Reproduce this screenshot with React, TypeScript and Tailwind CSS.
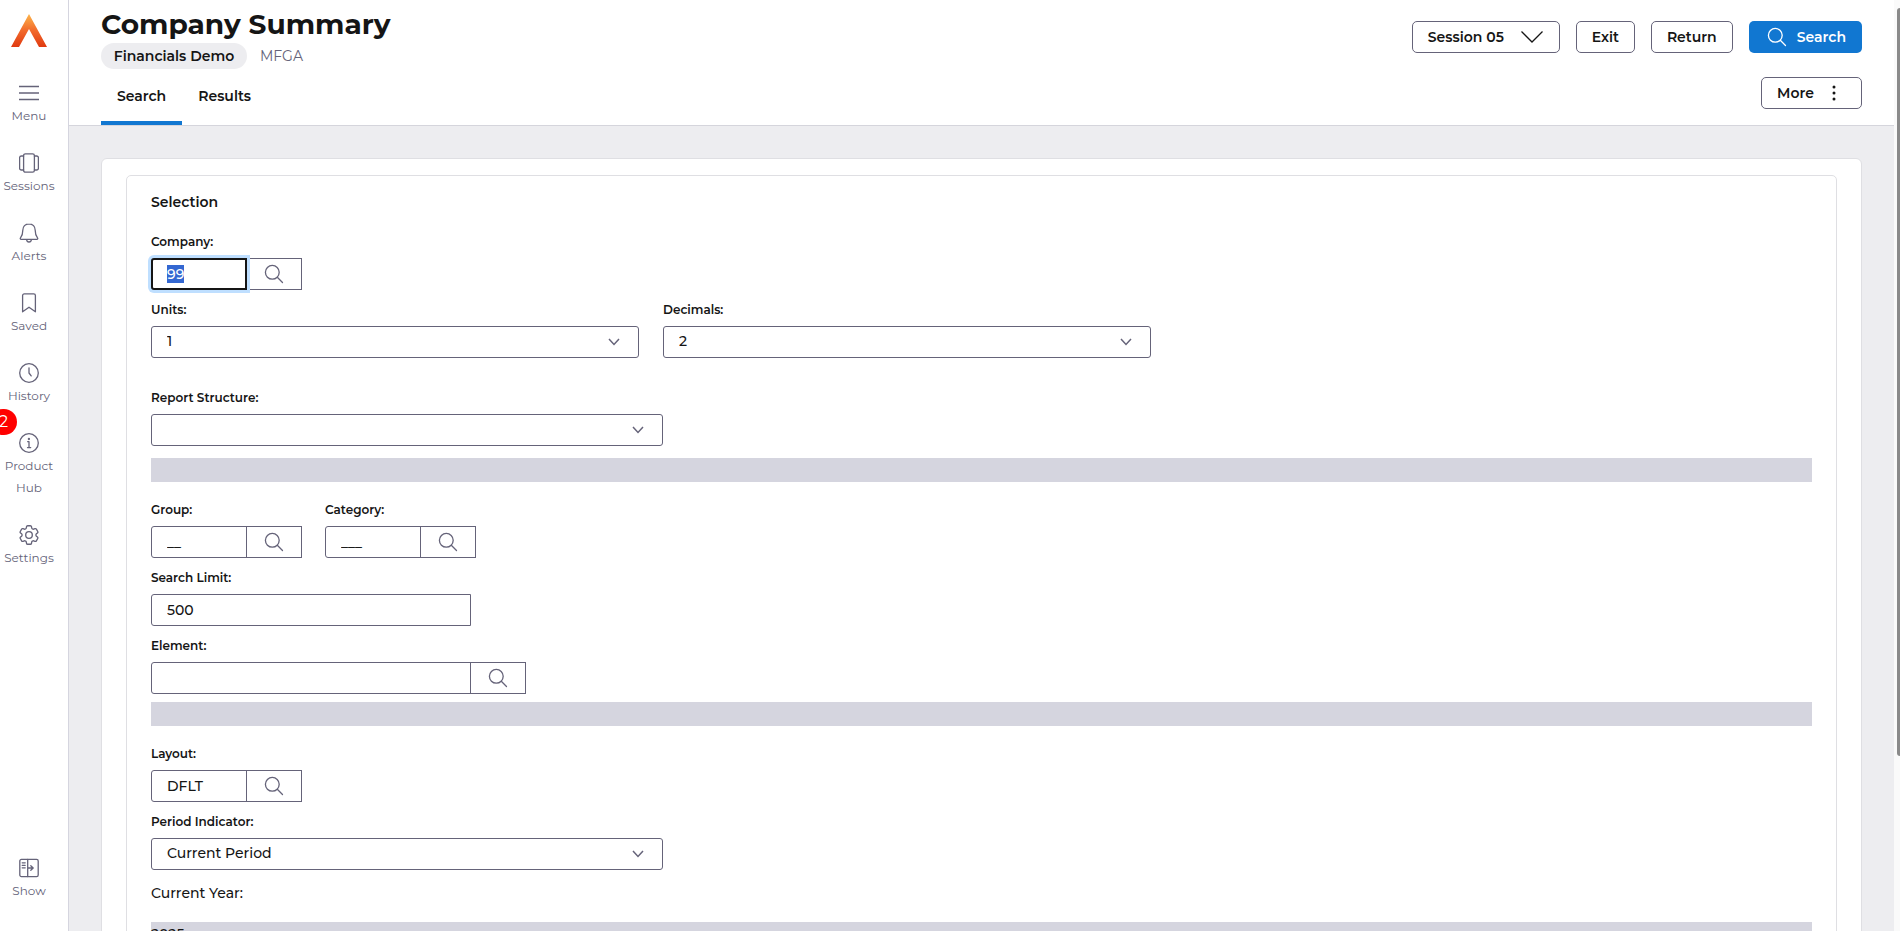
import React, { useEffect, useRef } from 'react';
import clsx from 'clsx';

const iconProps = {
  width: 20,
  height: 20,
  viewBox: '0 0 20 20',
  fill: 'none',
  stroke: 'currentColor',
  strokeWidth: 1.3,
  strokeLinecap: 'round' as const,
  strokeLinejoin: 'round' as const,
  'aria-hidden': true,
};

const MenuIcon = () => (
  <svg {...iconProps} strokeLinecap="butt">
    <path d="M0 3.5h20M0 10h20M0 16.5h20" />
  </svg>
);

const SessionsIcon = () => (
  <svg {...iconProps}>
    <rect x="4.6" y=".8" width="10.8" height="18.4" rx="1.8" />
    <path d="M4.6 3H2.4A1.8 1.8 0 0 0 .6 4.8v10.4A1.8 1.8 0 0 0 2.4 17H4.6M15.4 3h2.2a1.8 1.8 0 0 1 1.8 1.8v10.4a1.8 1.8 0 0 1-1.8 1.8h-2.2" />
  </svg>
);

const AlertsIcon = () => (
  <svg {...iconProps}>
    <path d="M10 .8C6.2.8 3.8 3.5 3.8 7.2c0 4.5-1.2 6.3-2.3 7.6-.6.7-.2 1.5.6 1.5h15.8c.8 0 1.2-.8.6-1.5-1.1-1.3-2.3-3.1-2.3-7.6C16.2 3.5 13.8.8 10 .8z" />
    <path d="M7.6 16.6c.2 1.4 1.1 2.4 2.4 2.4s2.2-1 2.4-2.4" />
  </svg>
);

const SavedIcon = () => (
  <svg {...iconProps}>
    <path d="M3.6 2.6c0-1 .7-1.8 1.7-1.8h9.4c1 0 1.7.8 1.7 1.8v16.2L10 14.2l-6.4 4.6z" />
  </svg>
);

const HistoryIcon = () => (
  <svg {...iconProps}>
    <circle cx="10" cy="10" r="9.3" />
    <path d="M10 4.8V10l2.2 2.9" />
  </svg>
);

const InfoIcon = () => (
  <svg {...iconProps}>
    <circle cx="10" cy="10" r="9.3" />
    <path d="M8.7 8.7H10v5.9M8.5 14.6h3.2" />
    <circle cx="9.9" cy="6" r=".5" fill="currentColor" />
  </svg>
);

const SettingsIcon = () => (
  <svg {...iconProps} viewBox="2.3 2.3 19.4 19.4">
    <path d="M9.594 3.94c.09-.542.56-.94 1.11-.94h2.593c.55 0 1.02.398 1.11.94l.213 1.281c.063.374.313.686.645.87.074.04.147.083.22.127.325.196.72.257 1.075.124l1.217-.456a1.125 1.125 0 0 1 1.37.49l1.296 2.247a1.125 1.125 0 0 1-.26 1.431l-1.003.827c-.293.241-.438.613-.43.992a7.723 7.723 0 0 1 0 .255c-.008.378.137.75.43.991l1.004.827c.424.35.534.955.26 1.43l-1.298 2.247a1.125 1.125 0 0 1-1.369.491l-1.217-.456c-.355-.133-.75-.072-1.076.124a6.47 6.47 0 0 1-.22.128c-.331.183-.581.495-.644.869l-.213 1.281c-.09.543-.56.94-1.11.94h-2.594c-.55 0-1.019-.398-1.11-.94l-.213-1.281c-.062-.374-.312-.686-.644-.87a6.52 6.52 0 0 1-.22-.127c-.325-.196-.72-.257-1.076-.124l-1.217.456a1.125 1.125 0 0 1-1.369-.49l-1.297-2.247a1.125 1.125 0 0 1 .26-1.431l1.004-.827c.292-.24.437-.613.43-.991a6.932 6.932 0 0 1 0-.255c.007-.38-.138-.751-.43-.992l-1.004-.827a1.125 1.125 0 0 1-.26-1.43l1.297-2.247a1.125 1.125 0 0 1 1.37-.491l1.216.456c.356.133.751.072 1.076-.124.072-.044.146-.086.22-.128.332-.183.582-.495.644-.869z" />
    <circle cx="12" cy="12" r="3.2" />
  </svg>
);

const ShowIcon = () => (
  <svg {...iconProps}>
    <rect x=".8" y="1.4" width="18.4" height="17.2" rx="1.6" />
    <path d="M8.7 1.4v17.2M3.2 4.8h3M3.2 7.3h3M3.2 9.8h3M9 10h5M11.8 7.7 14.2 10l-2.4 2.3" />
  </svg>
);

const SearchIcon = () => (
  <svg {...iconProps}>
    <circle cx="8.3" cy="8.3" r="6.9" />
    <path d="m13.3 13.3 5.2 5.2" />
  </svg>
);

const Logo = () => (
  <svg width="36" height="33" viewBox="0 0 36 33" aria-hidden>
    <defs>
      <linearGradient id="logo" x1="0" y1="0" x2="0" y2="1">
        <stop offset="0" stopColor="#fdb54a" />
        <stop offset=".5" stopColor="#f26a2c" />
        <stop offset="1" stopColor="#e03a10" />
      </linearGradient>
    </defs>
    <path d="M18 0 36 33h-8L18 15 8 33H0z" fill="url(#logo)" />
  </svg>
);

const navItems = [
  { label: 'Menu', icon: MenuIcon },
  { label: 'Sessions', icon: SessionsIcon },
  { label: 'Alerts', icon: AlertsIcon },
  { label: 'Saved', icon: SavedIcon },
  { label: 'History', icon: HistoryIcon },
  { label: 'Product Hub', icon: InfoIcon, badge: 2 },
  { label: 'Settings', icon: SettingsIcon },
];

interface NavItemProps {
  label: string;
  icon: React.ComponentType;
  badge?: number;
}

function NavItem({ label, icon: Icon, badge }: NavItemProps) {
  return (
    <button type="button" className="relative flex w-full flex-col items-center gap-0.5">
      <Icon />
      <span className="px-1 text-xs leading-[22px]">{label}</span>
      {badge && (
        <span className="absolute -top-6 -left-2.5 flex h-[26px] w-[27px] items-center justify-center rounded-full bg-[#ff0000] text-base text-white">
          {badge}
        </span>
      )}
    </button>
  );
}

function Sidebar() {
  return (
    <nav className="flex w-[69px] shrink-0 flex-col items-center border-r border-[#d5d5df] bg-white pt-3.5 pr-2.5 pb-[29px] text-[#656379]">
      <a href="#" aria-label="Home">
        <Logo />
      </a>
      <div className="mt-9 flex w-full flex-col gap-[26px]">
        {navItems.map((item) => (
          <NavItem key={item.label} {...item} />
        ))}
      </div>
      <div className="mt-auto w-full">
        <NavItem label="Show" icon={ShowIcon} />
      </div>
    </nav>
  );
}

interface FieldProps {
  id: string;
  label: string;
  className?: string;
  children: React.ReactNode;
}

function Field({ id, label, className, children }: FieldProps) {
  return (
    <div className={clsx('pt-2.5', className)}>
      <label htmlFor={id} className="mb-1.5 block text-xs leading-5 font-semibold">
        {label}
      </label>
      {children}
    </div>
  );
}

interface TextBoxProps {
  id: string;
  value?: string;
  lookup?: boolean;
  wide?: boolean;
  selected?: boolean;
}

function TextBox({ id, value = '', lookup, wide, selected }: TextBoxProps) {
  const ref = useRef<HTMLInputElement>(null);

  useEffect(() => {
    if (selected) {
      ref.current?.focus();
      ref.current?.select();
    }
  }, [selected]);

  return (
    <div className="flex">
      <input
        ref={ref}
        id={id}
        type="text"
        defaultValue={value}
        className={clsx(
          'h-8 rounded-l-[3px] border border-[#656379] bg-white px-[15px] text-sm font-medium outline-none selection:bg-[#3367d1] selection:text-white',
          'focus:z-10 focus:border-2 focus:border-[#151515] focus:px-3.5 focus:ring-3 focus:ring-[#bfdfff]',
          wide ? 'w-80' : 'w-24'
        )}
      />
      {lookup && (
        <button
          type="button"
          aria-label="Look up"
          className="-ml-px flex h-8 w-14 items-center justify-center border border-[#656379] text-[#656379]"
        >
          <SearchIcon />
        </button>
      )}
    </div>
  );
}

interface SelectBoxProps {
  id: string;
  value?: string;
}

function SelectBox({ id, value = '' }: SelectBoxProps) {
  return (
    <div className="relative">
      <select
        id={id}
        defaultValue={value}
        className="h-8 w-full appearance-none rounded-[3px] border border-[#656379] bg-white px-[15px] pb-0.5 text-sm font-medium outline-none"
      >
        <option value={value}>{value}</option>
      </select>
      <svg
        width="12"
        height="8"
        viewBox="0 0 12 8"
        fill="none"
        stroke="#656379"
        strokeWidth="1.5"
        aria-hidden
        className="pointer-events-none absolute top-3 right-[19px]"
      >
        <path d="M1 1l5 5.4L11 1" />
      </svg>
    </div>
  );
}

const outlineButton =
  'flex h-8 items-center justify-center rounded-[5px] border border-[#656379] bg-white text-sm font-semibold';

function Header() {
  return (
    <header className="flex h-[126px] shrink-0 justify-between border-b border-[#d5d5dc] bg-white px-8">
      <div className="flex flex-col">
        <h1 className="mt-1.5 mb-px text-[28px] leading-9 font-bold">Company Summary</h1>
        <div className="flex items-center gap-[13px] text-sm">
          <span className="flex h-[26px] w-[146px] items-center justify-center rounded-full bg-[#ededf0] font-semibold">
            Financials Demo
          </span>
          <span className="text-[#656379]">MFGA</span>
        </div>
        <div className="mt-auto flex text-sm font-semibold" role="tablist">
          <button
            type="button"
            role="tab"
            aria-selected="true"
            className="h-[50px] border-b-4 border-[#1177d1] px-4 pb-1"
          >
            Search
          </button>
          <button
            type="button"
            role="tab"
            aria-selected="false"
            className="h-[50px] border-b-4 border-transparent px-4 pb-1"
          >
            Results
          </button>
        </div>
      </div>

      <div className="flex flex-col items-end gap-6 pt-[21px]">
        <div className="flex gap-4">
          <button type="button" className={clsx(outlineButton, 'w-[148px] gap-4')}>
            Session 05
            <svg width="24" height="14" viewBox="0 0 24 14" fill="none" stroke="currentColor" strokeWidth="1.3" aria-hidden>
              <path d="M1.5 1.500 12 12 22.500 1.5" />
            </svg>
          </button>
          <button type="button" className={clsx(outlineButton, 'w-[59px]')}>
            Exit
          </button>
          <button type="button" className={clsx(outlineButton, 'w-[82px]')}>
            Return
          </button>
          <button
            type="button"
            className="flex h-8 items-center gap-2.5 rounded-[5px] bg-[#1177d1] pr-4 pl-[18px] text-sm font-semibold text-white"
          >
            <SearchIcon />
            Search
          </button>
        </div>
        <button type="button" className={clsx(outlineButton, 'w-[101px] gap-3 pr-1')}>
          More
          <svg width="16" height="16" viewBox="0 0 16 16" fill="currentColor" aria-hidden>
            <circle cx="8" cy="2" r="1.5" />
            <circle cx="8" cy="8" r="1.5" />
            <circle cx="8" cy="14" r="1.5" />
          </svg>
        </button>
      </div>
    </header>
  );
}

function SelectionForm() {
  return (
    <form className="min-h-[900px] rounded-[5px] border border-[#dfdfe3] px-6 pt-4">
      <h2 className="mb-2.5 text-sm leading-5 font-semibold">Selection</h2>

      <Field id="company" label="Company:">
        <TextBox id="company" value="99" lookup selected />
      </Field>

      <div className="flex gap-6">
        <Field id="units" label="Units:" className="w-[488px]">
          <SelectBox id="units" value="1" />
        </Field>
        <Field id="decimals" label="Decimals:" className="w-[488px]">
          <SelectBox id="decimals" value="2" />
        </Field>
      </div>

      <Field id="structure" label="Report Structure:" className="mt-5 w-[512px]">
        <SelectBox id="structure" />
      </Field>

      <div className="mt-3 h-6 bg-[#d5d5df]" />

      <div className="mt-2 flex gap-[23px]">
        <Field id="group" label="Group:">
          <TextBox id="group" value="__" lookup />
        </Field>
        <Field id="category" label="Category:">
          <TextBox id="category" value="___" lookup />
        </Field>
      </div>

      <Field id="limit" label="Search Limit:">
        <TextBox id="limit" value="500" wide />
      </Field>

      <Field id="element" label="Element:">
        <TextBox id="element" wide lookup />
      </Field>

      <div className="mt-2 h-6 bg-[#d5d5df]" />

      <Field id="layout" label="Layout:" className="mt-2">
        <TextBox id="layout" value="DFLT" lookup />
      </Field>

      <Field id="period" label="Period Indicator:" className="w-[512px]">
        <SelectBox id="period" value="Current Period" />
      </Field>

      <p className="mt-3 text-sm leading-[22px] font-medium">Current Year:</p>
      <div className="mt-[18px] h-6 bg-[#d5d5df] text-sm leading-6 font-medium">2025</div>
    </form>
  );
}

function App() {
  return (
    <div className="flex h-screen overflow-hidden bg-white font-['Montserrat','Inter',sans-serif] text-[#151515]">
      <Sidebar />
      <div className="flex min-w-0 flex-1 flex-col">
        <Header />
        <main className="min-h-0 flex-1 overflow-y-auto bg-[#ededf0] px-8 pt-8 [scrollbar-width:none]">
          <div className="rounded-md border border-[#dfdfe3] bg-white px-6 pt-4 pb-6">
            <SelectionForm />
          </div>
        </main>
      </div>
      {/* page scroll track */}
      <div className="flex w-1.5 shrink-0 flex-col items-end bg-[#fafafa] pt-2">
        <div className="h-[81%] w-[3px] rounded-l-full bg-[#8a8a8a]" />
      </div>
    </div>
  );
}

export default App;
